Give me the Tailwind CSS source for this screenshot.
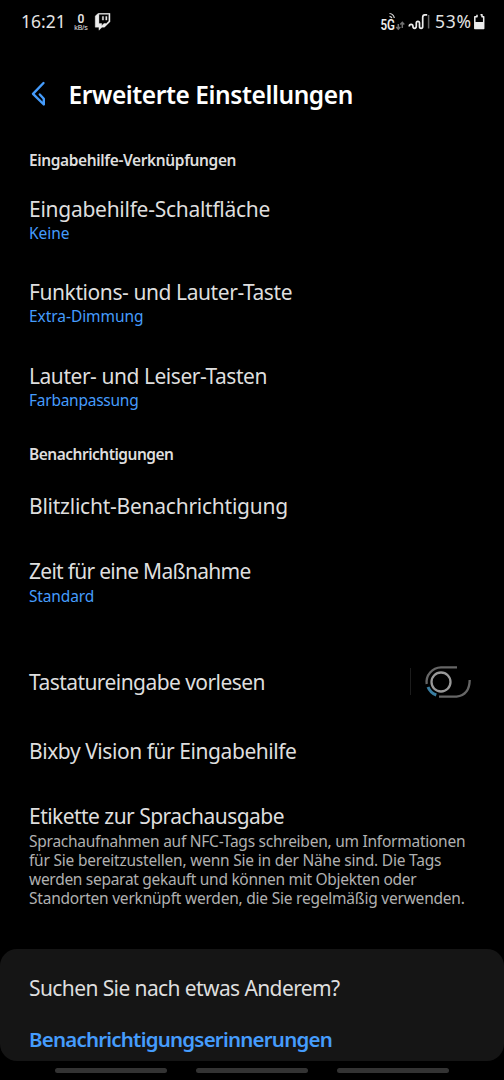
<!DOCTYPE html>
<html lang="de">
<head>
<meta charset="utf-8">
<title>Erweiterte Einstellungen</title>
<script src="https://cdn.jsdelivr.net/npm/@tailwindcss/browser@4"></script>
</head>
<body class="bg-black">
<div class="flex h-[1080px] w-[504px] flex-col overflow-hidden bg-black font-['Noto_Sans',sans-serif] text-[21px] font-normal leading-7 whitespace-nowrap text-[#dedede]">
  <header class="flex h-11 shrink-0 items-start pt-[7px] pl-[21px] text-[17.5px] text-[#e4e4e4]">
    <span class="w-[51px]">16:21</span>
    <span class="flex w-[18px] flex-col items-center pt-[7px] font-semibold">
      <span class="font-['Roboto',sans-serif] text-[12px] leading-[10px]">0</span>
      <span class="font-['Liberation_Sans',sans-serif] text-[7px] leading-[7px] font-normal">kB/s</span>
    </span>
    <svg class="mt-[6px] ml-[4px]" width="18" height="18" viewBox="0 0 25 25" fill="#ededed" stroke="#ededed" stroke-width=".5"><path fill-rule="evenodd" d="M11.571 4.714h1.715v5.143H11.570zm4.715 0H18v5.143h-1.714zM6 .4L1.714 4.286v15.428h5.143V24l4.286-4.286h3.428L22.286 12V.4zm14.571 10.743l-3.428 3.428h-3.429l-3 3v-3H6.857V1.900h13.714Z"/></svg>
    <svg class="mt-[5px] ml-[268px]" width="52" height="20" viewBox="380 12 52 20">
      <text x="380.500" y="29.500" font-family="Roboto" font-weight="600" font-size="14.500" textLength="14.500" lengthAdjust="spacingAndGlyphs" fill="#ededed">5G</text>
      <path d="M389.500 13.500q4 .3 4.800 4.500M389.500 16.300q2 .2 2.400 1.900" fill="none" stroke="#ddd" stroke-width="1.200"/>
      <path d="M398.300 24v5.500M396.300 27l2 2.200 2-2.200M402.300 28v-6M400.300 24.500l2-2.200 2 2.200" fill="none" stroke="#707070" stroke-width="1.500"/>
      <path d="M409.300 26.500V26q0-1.700 1.800-1.700t1.800 1.700q0 2.300 1.700 2.300t1.700-2.300v-3q0-1.700 1.600-1.700t1.600 1.700v3.500q0 1.800 1.600 1.800t1.600-1.800v-9.200q0-2.500 2.200-2.500h2.300" fill="none" stroke="#ededed" stroke-width="1.700"/>
      <path d="M428.600 15v13.500" stroke="#666" stroke-width="1.500"/>
    </svg>
    <span class="ml-[3px] w-[37px] tracking-[0.700px]">53%</span>
    <svg class="mt-[6px] ml-[2px]" width="11" height="18" viewBox="474 13 11 18"><path d="M480.500 14.700h1.500v2h1.700v11.800h-8.900V16.700h2.200v-2" fill="none" stroke="#ededed" stroke-width="1.500" stroke-linejoin="round"/><path d="M475 22h9v6.500h-9z" fill="#ededed"/></svg>
  </header>

  <div class="flex h-[106px] shrink-0 items-start pt-[37px] pl-[30px]">
    <svg width="20" height="26" viewBox="30 81 20 26" fill="none" stroke="#459cfc" stroke-width="2.400" stroke-linejoin="round" stroke-linecap="round"><path d="M43.500 83 33 93.800l10.800 10.700v-5.700L39.800 94.500"/></svg>
    <h1 class="-mt-[2px] ml-[18.500px] text-[24.500px] leading-[32px] font-semibold tracking-[-0.420px] text-white">Erweiterte Einstellungen</h1>
  </div>

  <main class="flex shrink-0 flex-col pl-[29px]">
    <h2 class="h-[45px] text-[15.500px] leading-5 font-semibold tracking-[-0.380px]">Eingabehilfe-Verknüpfungen</h2>
    <div class="h-[83px]">
      <p class="tracking-[-0.270px]">Eingabehilfe-Schaltfläche</p>
      <p class="text-[15.500px] leading-5 tracking-[-0.030px] text-[#459cfc]">Keine</p>
    </div>
    <div class="h-[84px]">
      <p class="tracking-[-0.420px]">Funktions- und Lauter-Taste</p>
      <p class="text-[15.500px] leading-5 tracking-[-0.050px] text-[#459cfc]">Extra-Dimmung</p>
    </div>
    <div class="h-[82px]">
      <p class="tracking-[-0.460px]">Lauter- und Leiser-Tasten</p>
      <p class="text-[15.500px] leading-5 tracking-[-0.250px] text-[#459cfc]">Farbanpassung</p>
    </div>
    <h2 class="h-12 text-[15.500px] leading-5 font-semibold tracking-[-0.500px]">Benachrichtigungen</h2>
    <p class="h-[65px] tracking-[-0.240px]">Blitzlicht-Benachrichtigung</p>
    <div class="h-[107px]">
      <p class="tracking-[-0.720px]">Zeit für eine Maßnahme</p>
      <p class="pt-px text-[15.500px] leading-5 tracking-[-0.150px] text-[#459cfc]">Standard</p>
    </div>
    <div class="flex h-[73px] items-start">
      <p class="h-8 w-[381px] pt-1 tracking-[-0.560px]">Tastatureingabe vorlesen</p>
      <div class="mt-1 h-[27px] w-px bg-[#1c1c1c]"></div>
      <svg class="ml-[11px]" width="50" height="36" viewBox="422 664 50 36" fill="none" stroke-width="2.300"><path d="M426.700 684A14.700 14.700 0 0 1 441 667.400H457M439 696.600H456.500Q469.500 695 469.700 680" stroke="#666"/><circle cx="441" cy="682" r="9.500" stroke="#999"/><path d="M428 687a14 14 0 0 0 8.300 8" stroke="#397da0" stroke-width="3"/></svg>
    </div>
    <p class="h-[65px] tracking-[-0.440px]">Bixby Vision für Eingabehilfe</p>
    <p class="tracking-[-0.540px]">Etikette zur Sprachausgabe</p>
    <div class="flex flex-col pt-[2px] text-[15.500px] leading-[19px] text-[#b0b0b0]">
      <p class="tracking-[-0.250px]">Sprachaufnahmen auf NFC-Tags schreiben, um Informationen</p>
      <p class="tracking-[-0.210px]">für Sie bereitzustellen, wenn Sie in der Nähe sind. Die Tags</p>
      <p class="tracking-[-0.290px]">werden separat gekauft und können mit Objekten oder</p>
      <p class="tracking-[-0.220px]">Standorten verknüpft werden, die Sie regelmäßig verwenden.</p>
    </div>
  </main>

  <section class="mt-auto h-[112px] shrink-0 rounded-[17px] bg-[#151515] pt-[25px] pl-[29px]">
    <p class="h-[51px] tracking-[-0.600px]">Suchen Sie nach etwas Anderem?</p>
    <p class="text-[20.500px] font-semibold tracking-[-0.790px] text-[#459cfc]">Benachrichtigungserinnerungen</p>
  </section>
  <nav class="flex h-[19px] shrink-0 gap-[29px] pt-[7px] pl-[55px]">
    <div class="h-[5px] w-28 rounded-full bg-[#333]"></div>
    <div class="h-[5px] w-28 rounded-full bg-[#333]"></div>
    <div class="h-[5px] w-28 rounded-full bg-[#333]"></div>
  </nav>
</div>
</body>
</html>
